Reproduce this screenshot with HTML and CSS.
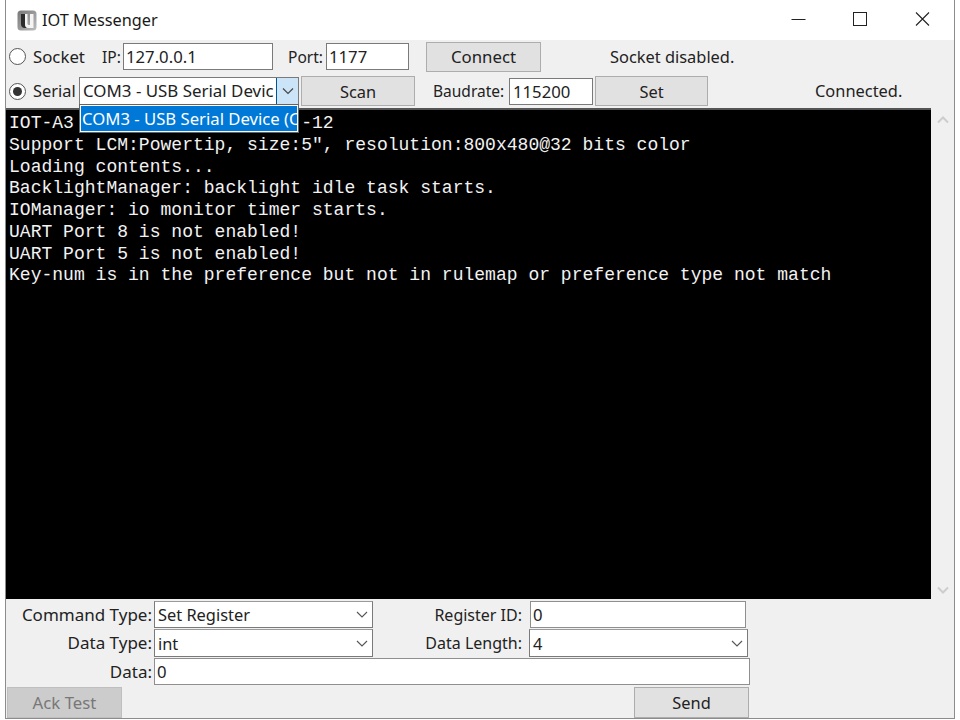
FILE: index.html
```html
<!DOCTYPE html>
<html lang="en">
<head>
<meta charset="utf-8">
<title>IOT Messenger</title>
<link rel="stylesheet" href="styles.css">
</head>
<body>
<div class="window">
  <header class="titlebar">
    <svg class="app-icon" width="20" height="21" viewBox="0 0 20 21"><defs><linearGradient id="g" x1="0" y1="0" x2="1" y2="1"><stop offset="0" stop-color="#777"/><stop offset="1" stop-color="#bdbdbd"/></linearGradient></defs><rect x="0.500" y="0.500" width="19" height="20" rx="3.500" fill="url(#g)"/><path d="M4 4v10q0 4 4 4h3q-3-1-3-4V4z" fill="#2c2c2c"/><path d="M8 4h2.500v9.500q0 1.500 1.500 1.500h1V4h3.500v14H11q-3 0-3-4z" fill="#f4f4f4"/></svg>
    <span class="title">IOT Messenger</span>
    <div class="caption-buttons">
      <svg class="cap-min" width="46" height="20" viewBox="0 0 46 20"><path d="M16.500 9.500h14" stroke="#222" stroke-width="1"/></svg>
      <svg class="cap-max" width="46" height="20" viewBox="0 0 46 20"><rect x="15.500" y="2.500" width="13" height="13" fill="none" stroke="#222"/></svg>
      <svg width="46" height="20" viewBox="0 0 46 20"><path d="M17 2.500l13 13M30 2.500l-13 13" stroke="#222" stroke-width="1.100" fill="none"/></svg>
    </div>
  </header>

  <div class="row row-socket">
    <span class="radio"></span>
    <span class="lbl w-socket">Socket</span>
    <span class="lbl w-ip">IP:</span>
    <span class="field w-ipf">127.0.0.1</span>
    <span class="lbl w-port">Port:</span>
    <span class="field w-portf">1177</span>
    <button class="btn w-connect">Connect</button>
    <span class="lbl status-socket">Socket disabled.</span>
  </div>

  <div class="row row-serial">
    <span class="radio on"></span>
    <span class="lbl w-serial">Serial</span>
    <div class="combo">
      <span class="combo-text">COM3 - USB Serial Devic</span>
      <span class="combo-arrow"><svg width="12" height="8" viewBox="0 0 12 8"><path d="M1 1.500l5 5 5-5" fill="none" stroke="#444" stroke-width="1.100"/></svg></span>
      <div class="popup"><div class="popup-item">COM3 - USB Serial Device (C</div></div>
    </div>
    <button class="btn w-scan">Scan</button>
    <span class="lbl w-baud">Baudrate:</span>
    <span class="field w-baudf">115200</span>
    <button class="btn w-set">Set</button>
    <span class="lbl status-serial">Connected.</span>
  </div>

  <div class="console-wrap">
    <pre class="console">IOT-A3                     -12
Support LCM:Powertip, size:5", resolution:800x480@32 bits color
Loading contents...
BacklightManager: backlight idle task starts.
IOManager: io monitor timer starts.
UART Port 8 is not enabled!
UART Port 5 is not enabled!
Key-num is in the preference but not in rulemap or preference type not match</pre>
    <div class="scrollbar">
      <svg width="12" height="8" viewBox="0 0 12 8"><path d="M1 6.500l5-5 5 5" fill="none" stroke="#cdcdcd" stroke-width="2"/></svg>
      <svg width="12" height="8" viewBox="0 0 12 8"><path d="M1 1.500l5 5 5-5" fill="none" stroke="#cdcdcd" stroke-width="2"/></svg>
    </div>
  </div>

  <div class="form">
    <div class="form-row r1">
      <span class="lbl form-label">Command Type:</span>
      <div class="select w-sel1"><span>Set Register</span><svg width="12" height="7" viewBox="0 0 12 7"><path d="M1 1l5 5 5-5" fill="none" stroke="#555" stroke-width="1.100"/></svg></div>
      <span class="lbl form-label2">Register ID:</span>
      <span class="field flat w-reg">0</span>
    </div>
    <div class="form-row r2">
      <span class="lbl form-label">Data Type:</span>
      <div class="select w-sel1"><span>int</span><svg width="12" height="7" viewBox="0 0 12 7"><path d="M1 1l5 5 5-5" fill="none" stroke="#555" stroke-width="1.100"/></svg></div>
      <span class="lbl form-label2">Data Length:</span>
      <div class="select w-sel2"><span>4</span><svg width="12" height="7" viewBox="0 0 12 7"><path d="M1 1l5 5 5-5" fill="none" stroke="#555" stroke-width="1.100"/></svg></div>
    </div>
    <div class="form-row r3">
      <span class="lbl form-label">Data:</span>
      <span class="field flat w-data">0</span>
    </div>
    <div class="form-row r4">
      <button class="btn disabled w-ack">Ack Test</button>
      <button class="btn w-send">Send</button>
    </div>
  </div>
</div>
</body>
</html>
```
FILE: styles.css
```css
* { box-sizing: border-box; }
html, body { margin: 0; padding: 0; background: #fff; }
body { width: 960px; height: 720px; overflow: hidden; font-family: "Noto Sans", "Open Sans", sans-serif; font-size: 16.4px; color: #222; }
.window { margin-left: 5px; width: 950px; height: 719px; background: #f0f0f0; border: 1px solid #8c8c8c; border-top: 0; display: flex; flex-direction: column; }
.titlebar { height: 40px; flex: none; background: #fff; display: flex; align-items: center; padding-left: 11px; }
.app-icon { flex: none; }
.title { margin-left: 5px; font-size: 16.3px; color: #1a1a1a; }
.caption-buttons { margin-left: auto; display: flex; margin-right: 9px; }
.caption-buttons svg { display: block; }
.cap-min { margin-right: 17px; }
.cap-max { margin-right: 15px; }
.row { flex: none; display: flex; align-items: center; position: relative; }
.row-socket { height: 33px; padding-left: 3px; }
.row-serial { height: 35px; padding: 1px 0 0 3px; }
.radio { flex: none; width: 17px; height: 17px; border-radius: 50%; border: 1px solid #555; background: #fff; position: relative; }
.radio.on::after { content: ""; position: absolute; left: 3px; top: 3px; width: 9px; height: 9px; border-radius: 50%; background: #333; }
.lbl { flex: none; white-space: nowrap; line-height: 20px; }
.field { flex: none; display: flex; align-items: center; background: #fff; border: 1px solid #7a7a7a; padding-left: 2px; white-space: nowrap; overflow: hidden; height: 27px; font-size: 16.7px; }
.btn { flex: none; height: 30px; font: inherit; color: #222; background: #e1e1e1; border: 1px solid #adadad; padding: 0; }
.w-socket { margin-left: 7px; width: 52px; font-size: 16.8px; }
.w-ip { margin-left: 17px; width: 18px; font-size: 15.5px; }
.w-ipf { margin-left: 3px; width: 150px; }
.w-port { margin-left: 15px; width: 35px; font-size: 15.5px; }
.w-portf { margin-left: 3px; width: 83px; }
.w-connect { margin-left: 17px; width: 115px; font-size: 16.8px; }
.status-socket { margin-left: 69px; }
.w-serial { margin-left: 7px; width: 42px; }
.combo { flex: none; position: relative; display: flex; width: 220px; height: 28px; margin-left: 4px; background: #fff; border: 1px solid #7a7a7a; font-size: 16.9px; }
.combo-text { flex: 1; min-width: 0; overflow: hidden; white-space: nowrap; padding-left: 3px; line-height: 26px; }
.combo-arrow { flex: none; width: 22px; display: flex; align-items: center; justify-content: center; background: #cce4f7; border-left: 1px solid #005499; }
.popup { position: absolute; left: -1px; top: 26px; width: 220px; height: 29px; background: #fff; border: 1px solid #646464; padding: 1px; z-index: 2; }
.popup-item { height: 25px; background: #0078d7; color: #fff; overflow: hidden; white-space: nowrap; line-height: 25px; padding-left: 1px; font-size: 16.7px; }
.w-scan { margin-left: 2px; width: 114px; }
.w-baud { margin-left: 18px; width: 73px; font-size: 15.5px; }
.w-baudf { margin-left: 3px; width: 84px; height: 27px; padding-left: 3px; }
.w-set { margin-left: 2px; width: 113px; }
.status-serial { margin-left: 107px; }
.console-wrap { flex: none; height: 491px; display: flex; }
.console { flex: none; width: 925px; margin: 0; background: #000; color: #f2f2f2; border-top: 2px solid #555; font-family: "Liberation Mono", monospace; font-size: 18.05px; line-height: 21.75px; padding: 3px 0 0 3px; overflow: hidden; }
.scrollbar { flex: 1; display: flex; flex-direction: column; justify-content: space-between; align-items: center; padding: 8px 0 5px; }
.scrollbar svg { display: block; }
.form { flex: 1; min-height: 0; display: flex; flex-direction: column; gap: 1px; padding-top: 2px; }
.form-row { flex: none; display: flex; align-items: center; height: 27px; }
.r2 { height: 28px; }
.form-label { width: 146px; text-align: right; font-size: 17px; }
.form-label2 { width: 149px; text-align: right; font-size: 16px; }
.select { flex: none; height: 100%; background: #fff; border: 1px solid #7a7a7a; border-top-color: #9a9a9a; display: flex; align-items: center; justify-content: space-between; padding: 0 4px 0 3px; margin-left: 2px; }
.flat { height: 100%; margin-left: 2px; border-color: #8f8f8f; }
.w-sel1 { width: 219px; }
.w-sel2 { width: 219px; margin-left: 7px; }
.w-reg { width: 216px; margin-left: 8px; }
.w-data { width: 596px; }
.r4 { height: 31px; margin-top: 1px; justify-content: space-between; padding-left: 1px; align-items: flex-start; }
.disabled { background: #ccc; border-color: #bfbfbf; color: #787878; font-size: 16.8px; }
.w-ack { width: 115px; height: 31px; }
.w-send { width: 115px; height: 31px; margin-right: 205px; }
```
